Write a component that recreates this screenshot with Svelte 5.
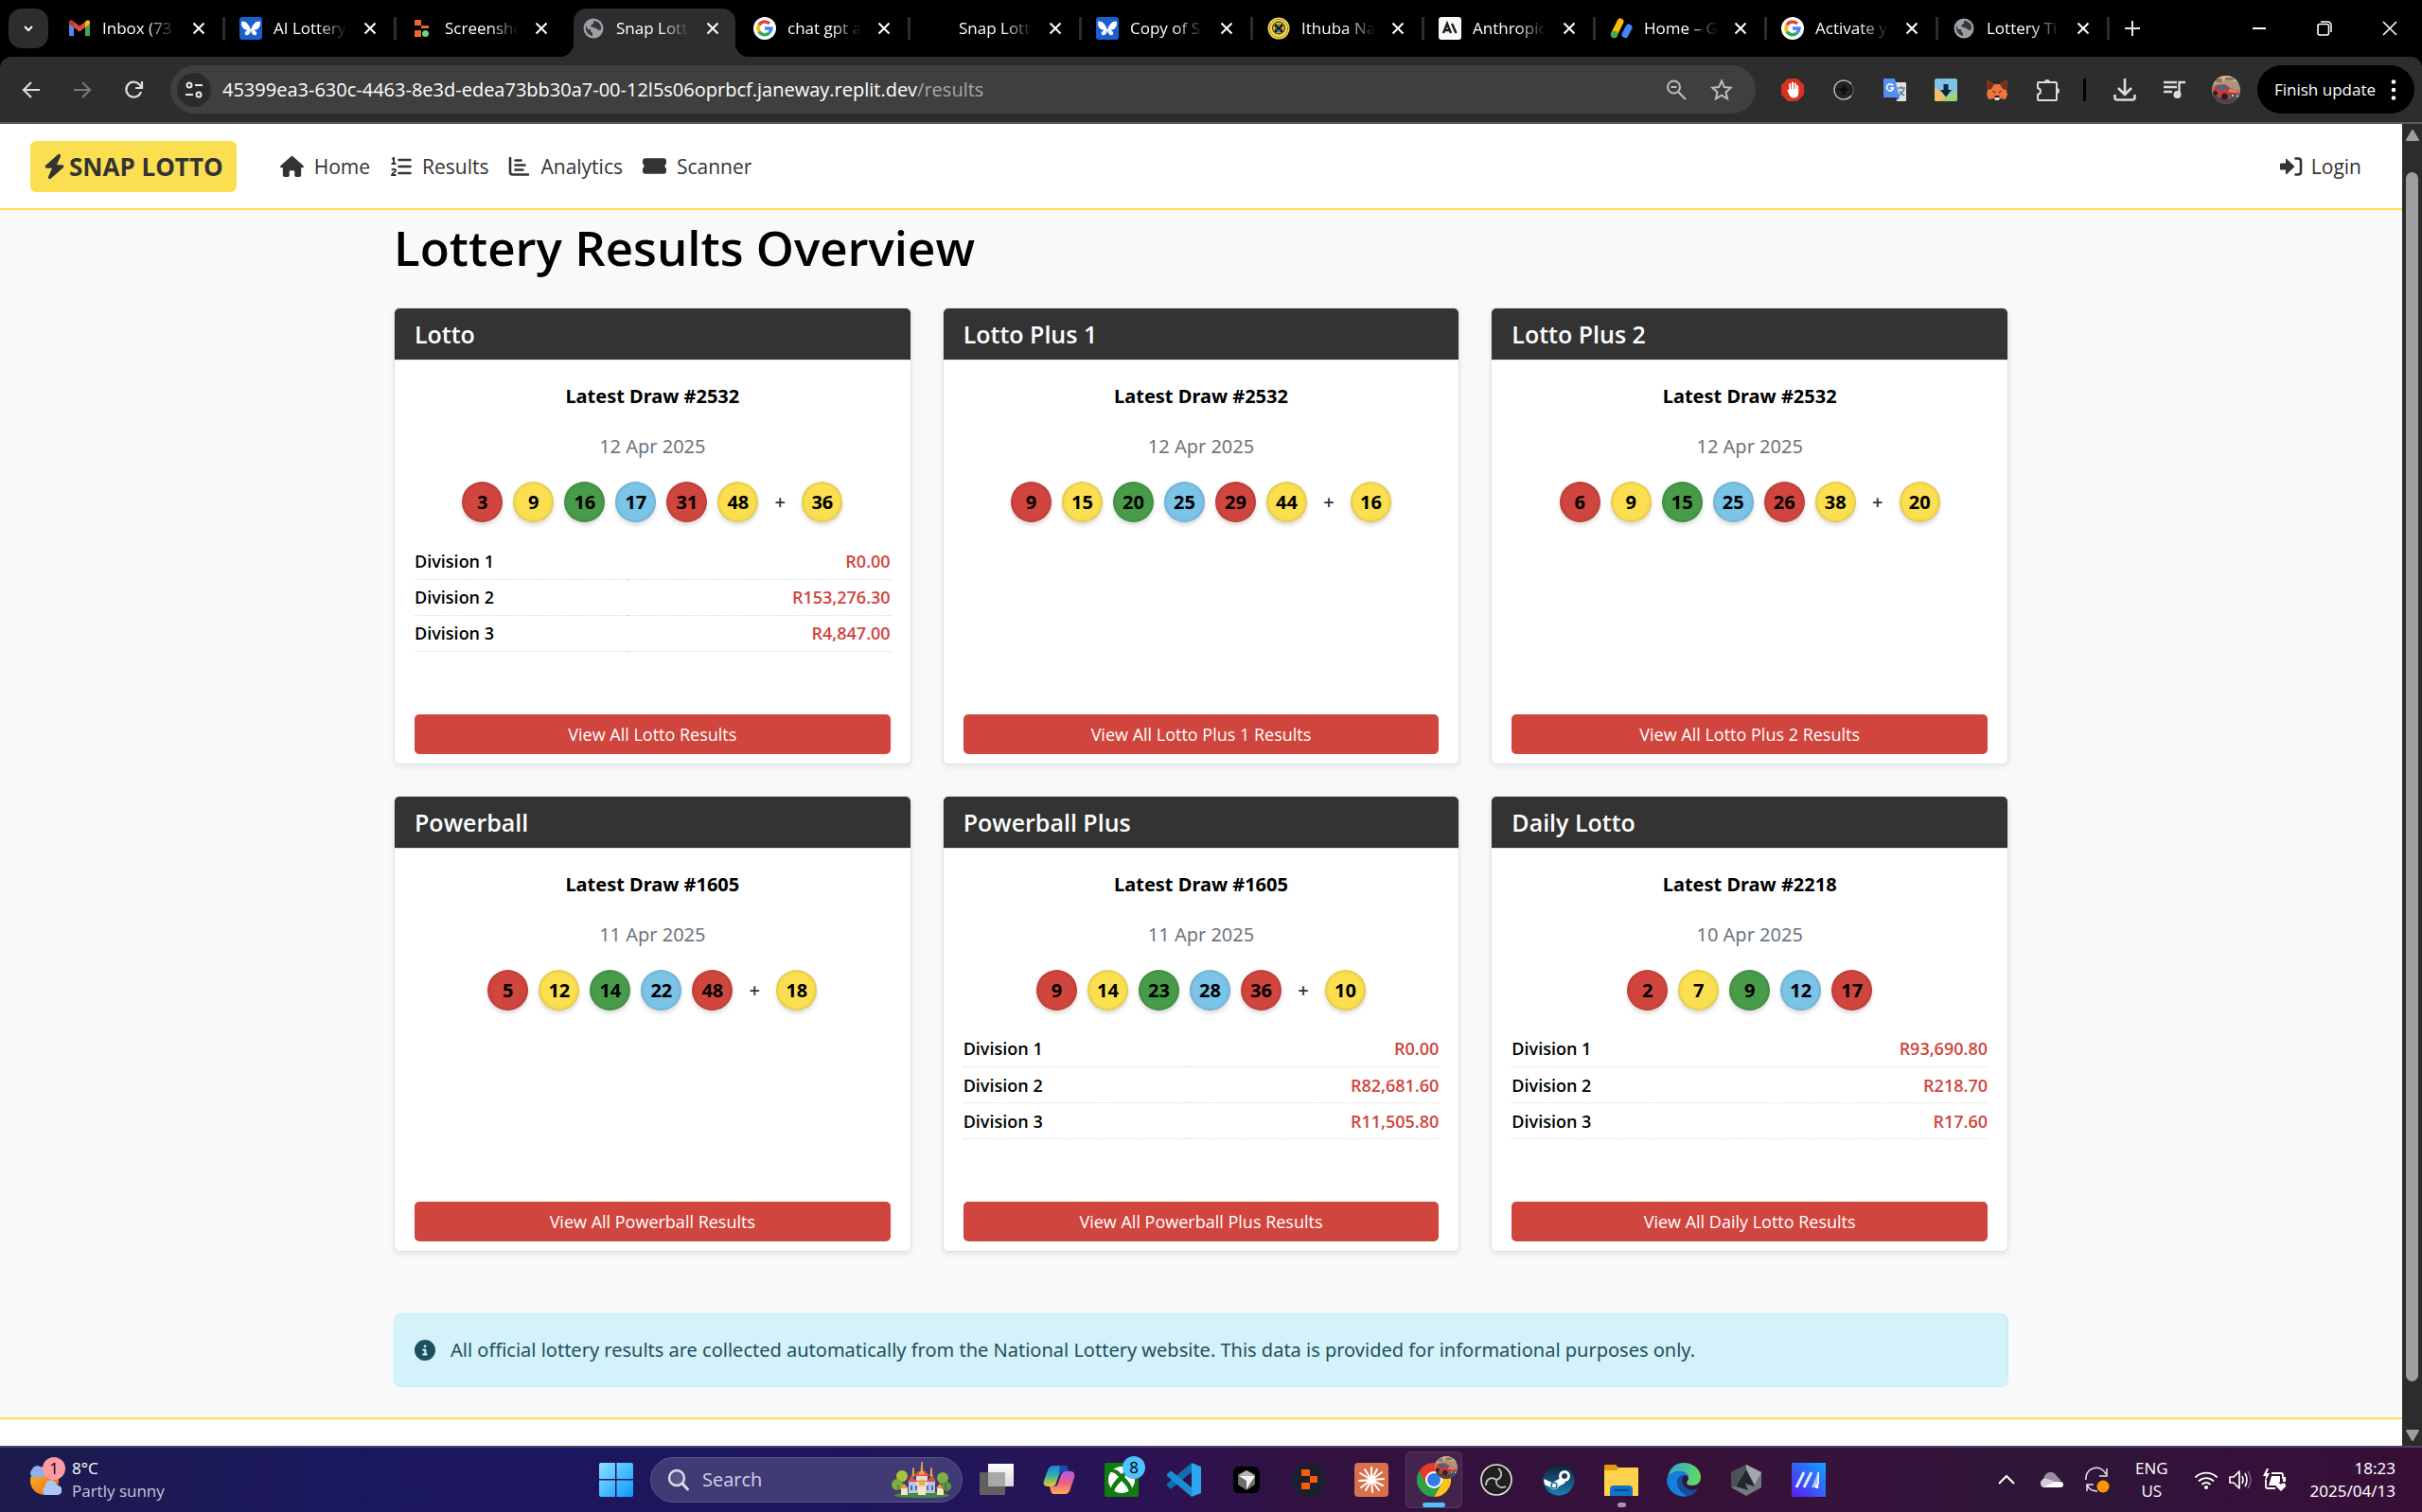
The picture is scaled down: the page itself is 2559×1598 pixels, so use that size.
<script>
  const tabs = [
    { title: 'Inbox (73', icon: 'gmail' },
    { title: 'AI Lottery', icon: 'butterfly' },
    { title: 'Screensho', icon: 'blocks' },
    { title: 'Snap Lott', icon: 'globe', active: true },
    { title: 'chat gpt a', icon: 'google' },
    { title: 'Snap Lott', icon: 'blank' },
    { title: 'Copy of S', icon: 'butterfly' },
    { title: 'Ithuba Na', icon: 'ithuba' },
    { title: 'Anthropic', icon: 'anthropic' },
    { title: 'Home – G', icon: 'adsense' },
    { title: 'Activate y', icon: 'google' },
    { title: 'Lottery Ti', icon: 'globe' }
  ];

  const extensions = ['adblock', 'dial', 'translate', 'save', 'fox', 'puzzle'];

  const links = [
    { label: 'Home', icon: 'home' },
    { label: 'Results', icon: 'list' },
    { label: 'Analytics', icon: 'chart' },
    { label: 'Scanner', icon: 'ticket' }
  ];

  const colours = ['red', 'yellow', 'green', 'blue', 'red', 'yellow'];

  const games = [
    { name: 'Lotto', draw: 2532, date: '12 Apr 2025', balls: [3, 9, 16, 17, 31, 48], bonus: 36, prizes: ['R0.00', 'R153,276.30', 'R4,847.00'] },
    { name: 'Lotto Plus 1', draw: 2532, date: '12 Apr 2025', balls: [9, 15, 20, 25, 29, 44], bonus: 16, prizes: [] },
    { name: 'Lotto Plus 2', draw: 2532, date: '12 Apr 2025', balls: [6, 9, 15, 25, 26, 38], bonus: 20, prizes: [] },
    { name: 'Powerball', draw: 1605, date: '11 Apr 2025', balls: [5, 12, 14, 22, 48], bonus: 18, prizes: [] },
    { name: 'Powerball Plus', draw: 1605, date: '11 Apr 2025', balls: [9, 14, 23, 28, 36], bonus: 10, prizes: ['R0.00', 'R82,681.60', 'R11,505.80'] },
    { name: 'Daily Lotto', draw: 2218, date: '10 Apr 2025', balls: [2, 7, 9, 12, 17], bonus: null, prizes: ['R93,690.80', 'R218.70', 'R17.60'] }
  ];

  const apps = [
    { name: 'Task view', icon: 'taskview' },
    { name: 'Copilot', icon: 'copilot' },
    { name: 'Xbox', icon: 'xbox', badge: '8' },
    { name: 'Visual Studio Code', icon: 'vscode' },
    { name: 'Cursor', icon: 'cursor' },
    { name: 'Replit', icon: 'replit' },
    { name: 'Claude', icon: 'claude' },
    { name: 'Chrome', icon: 'chrome', active: true },
    { name: 'OBS Studio', icon: 'obs' },
    { name: 'Steam', icon: 'steam' },
    { name: 'File Explorer', icon: 'folder', open: true },
    { name: 'Edge', icon: 'edge' },
    { name: 'Armoury Crate', icon: 'armoury' },
    { name: 'MyASUS', icon: 'myasus' }
  ];
</script>

{#snippet photo()}
  <svg class="photo" viewBox="0 0 30 30" aria-hidden="true">
    <defs><clipPath id="round"><circle cx="15" cy="15" r="15" /></clipPath></defs>
    <g clip-path="url(#round)">
      <rect width="30" height="30" fill="#a9967c" />
      <path d="M0 0h30v7L16 5 0 9z" fill="#cdb795" />
      <path d="M4 3h7v4H4zM14 2h9v3h-9z" fill="#8d7659" />
      <path d="M0 21h30v9H0z" fill="#4d4342" />
      <path d="M1 15l3-5 10-1 7 5 7 2 1 6-7 3-12-1-8-4z" fill="#cc3d31" />
      <path d="M5 11l8-1 5 4-11 1z" fill="#3b669c" />
      <path d="M18 14l9 2v2l-9-1z" fill="#e08d5e" />
      <circle cx="13.500" cy="22" r="3.500" fill="#20242e" />
      <circle cx="3.500" cy="18.500" r="2.500" fill="#20242e" />
      <path d="M19 19l9 1v4l-8 1z" fill="#41506c" />
      <path d="M21 20l2 .5v1.500l-2-.5zM26 20.500l2 .5v1.500l-2-.5z" fill="#e9edf2" />
    </g>
  </svg>
{/snippet}

{#snippet icon(name)}
  {#if name === 'gmail'}
    <svg class="i24" viewBox="0 0 24 24" aria-hidden="true"><path d="M1 6v13a1 1 0 0 0 1 1h4V9z" fill="#4c8bf5" /><path d="M23 6v13a1 1 0 0 1-1 1h-4V9z" fill="#45a654" /><path d="M18 5v6l5-4V5.500C23 3 20.500 2.500 19 4z" fill="#fbbc04" /><path d="M6 5l6 4.500L18 5v6l-6 4.500L6 11z" fill="#e5483a" /><path d="M6 5v6L1 7V5.500C1 3 3.500 2.500 5 4z" fill="#c5372c" /></svg>
  {:else if name === 'butterfly'}
    <svg class="i24" viewBox="0 0 24 24" aria-hidden="true"><rect width="24" height="24" rx="3" fill="#1a5fd0" /><path d="M12 14C11 9 7 4 3 4.500 1 5 2 11.500 5.500 13c2 .8 3.500.8 5 .3-3 .7-5.500 2.700-4.500 5 1.200 2 5 1.500 6-4.300zM12 14c1-5 5-10 9-9.500 2 .5 1 7-2.500 8.500-2 .8-3.500.8-5 .3 3 .7 5.500 2.700 4.500 5-1.200 2-5 1.500-6-4.300z" fill="#fff" /></svg>
  {:else if name === 'blocks'}
    <svg class="i24" viewBox="0 0 24 24" aria-hidden="true"><path d="M4 3h7v6H4zM11 9h8v3h-8zM4 14h7v7H4z" fill="#e8682c" /><circle cx="15.500" cy="17.500" r="3.500" fill="#74d183" /></svg>
  {:else if name === 'globe'}
    <svg class="i24" viewBox="0 0 24 24" aria-hidden="true"><circle cx="12" cy="12" r="10.500" fill="#9aa0a6" /><path d="M4 9c-1 5 2 10 7 11v-3l-2-2v-2H6zM12 4c5 0 9 4 8 9l-3 1-2-2-3-1-3-1 1-2 2-1z" fill="#35373a" /></svg>
  {:else if name === 'google'}
    <svg class="i24" viewBox="0 0 24 24" aria-hidden="true"><circle cx="12" cy="12" r="12" fill="#fff" /><g fill="none" stroke-width="3.500"><path d="M6 8.500a7 7 0 0 1 11-1.500" stroke="#ea4335" /><path d="M6 15.500a7 7 0 0 1 0-7" stroke="#fbbc05" /><path d="M16.500 17A7 7 0 0 1 6 15.500" stroke="#34a853" /><path d="M12 12h7a7 7 0 0 1-2.500 5" stroke="#4285f4" /></g></svg>
  {:else if name === 'ithuba'}
    <svg class="i24" viewBox="0 0 24 24" aria-hidden="true"><circle cx="12" cy="12" r="11.500" fill="#f0d648" /><circle cx="12" cy="12" r="9.500" fill="none" stroke="#7b6c20" stroke-dasharray="2 1" /><circle cx="12" cy="11.500" r="6.500" fill="#d8b92f" stroke="#222" /><path d="M8 8l8 8M16 8l-8 8" stroke="#111" stroke-width="2.600" /><path d="M12 7l2 2-2 2-2-2z" fill="#2f9e44" /><path d="M12 13l2 2-2 2-2-2z" fill="#3a8ee0" /><path d="M8 10l2 2-2 2zM16 10l-2 2 2 2z" fill="#d6402f" /></svg>
  {:else if name === 'anthropic'}
    <svg class="i24" viewBox="0 0 24 24" aria-hidden="true"><rect width="24" height="24" rx="3" fill="#faf9f5" /><path d="M5 17L9 7l4 10M6.500 14h5M14 7l4.500 10" fill="none" stroke="#191919" stroke-width="2.400" /></svg>
  {:else if name === 'adsense'}
    <svg class="i24" viewBox="0 0 24 24" aria-hidden="true"><path d="M4.500 18L11 5" stroke="#fbbc04" stroke-width="7" stroke-linecap="round" /><path d="M16 18.500l4-7.500" stroke="#4285f4" stroke-width="7" stroke-linecap="round" /><circle cx="4.500" cy="18.500" r="3.700" fill="#45a654" /></svg>
  {:else if name === 'blank'}
    <span class="i24"></span>
  {:else if name === 'adblock'}
    <svg class="i24" viewBox="0 0 24 24" aria-hidden="true"><path d="M7 0h10l7 7v10l-7 7H7l-7-7V7z" fill="#d9301f" /><path d="M9.200 6v6M12 4.500V13M14.800 5.500V13M17.200 8v6" stroke="#fff" stroke-width="2" stroke-linecap="round" /><path d="M8.200 11h10v4c0 4-2 5.500-5 5.500s-4-1.500-5-4l-2-4q1-1.500 2 0z" fill="#fff" /></svg>
  {:else if name === 'dial'}
    <svg class="i24" viewBox="0 0 24 24" aria-hidden="true"><circle cx="12" cy="12" r="9.500" fill="#242424" stroke="#111" stroke-width="2" /><path d="M20 6A10 10 0 1 0 20 18" fill="none" stroke="#c9c9c9" stroke-width="1.300" /><path d="M20 6a10 10 0 0 1 0 12" fill="none" stroke="#777" /><path d="M5 11l5-1 2-4 2 4 4 1-4 3-1 3h-3v-3z" fill="#0c0c0c" /></svg>
  {:else if name === 'translate'}
    <svg class="i24" viewBox="0 0 24 24" aria-hidden="true"><path d="M11 4h12a1 1 0 0 1 1 1v18a1 1 0 0 1-1 1h-9z" fill="#dfe2e4" /><path d="M15 10h8M19 8v2M22 10c-1 4-3 6-6 8M17 13c1 3 3 4 5 5" stroke="#607d9c" stroke-width="1.400" fill="none" /><path d="M13 20l4 0-4 4z" fill="#2b4fc0" /><path d="M1 0h11l5 20H1a1 1 0 0 1-1-1V1a1 1 0 0 1 1-1z" fill="#548ff0" /><path d="M10 7.500A3.500 3.500 0 1 0 10.500 10H7" fill="none" stroke="#fff" stroke-width="1.600" /></svg>
  {:else if name === 'save'}
    <svg class="i24" viewBox="0 0 24 24" aria-hidden="true"><rect width="24" height="24" rx="2" fill="#7fc4e8" /><path d="M0 9l12 10-5 5H2a2 2 0 0 1-2-2z" fill="#f5bd62" /><path d="M7 24l5-5 12-6v9a2 2 0 0 1-2 2z" fill="#a7cf7a" /><path d="M9.500 6h5v6h3.500L12 19.500 6 12h3.500z" fill="#0d2240" /></svg>
  {:else if name === 'fox'}
    <svg class="i24" viewBox="0 0 24 24" aria-hidden="true"><path d="M1 1l8 5h6l8-5-1 11 1 5-2 5-6-1-3 2-3-2-6 1-2-5 1-5z" fill="#f0733a" /><path d="M1 1l8 5-3 5-4 1zM23 1l-8 5 3 5 4 1z" fill="#763017" /><path d="M6 12l4 2v2zM18 12l-4 2v2z" fill="#263442" /><path d="M9 20h6l-1 3h-4z" fill="#e8ded5" /><path d="M10 18h4l1 2H9z" fill="#222" /></svg>
  {:else if name === 'puzzle'}
    <svg class="i24" viewBox="0 0 24 24" aria-hidden="true"><path d="M2 4h18q1 0 1 1v17q0 1-1 1H2q-1 0-1-1v-5c4-1 4-6 0-7V5q0-1 1-1z" fill="none" stroke="#dcdcdc" stroke-width="2" stroke-linejoin="round" /><path d="M8 4a3 3 0 0 1 6 0zM21 10a3 3 0 0 1 0 6z" fill="#dcdcdc" /></svg>
  {:else if name === 'home'}
    <svg class="fa" viewBox="0 0 576 512" aria-hidden="true"><path d="M575.8 255.500c0 18-15 32.100-32 32.100h-32l.7 160.200c0 2.700-.2 5.400-.5 8.100V472c0 22.100-17.900 40-40 40h-80c-22.100 0-40-17.900-40-40v-88c0-17.700-14.300-32-32-32h-64c-17.700 0-32 14.300-32 32v88c0 22.100-17.900 40-40 40h-80c-22.100 0-40-17.900-40-40V287.600H32c-18 0-32-14-32-32.100 0-9 3-17 10-24L266.400 8c7-7 15-8 22-8s15 2 21 7l255.400 224.500c8 7 12 15 11 24z" /></svg>
  {:else if name === 'list'}
    <svg class="fa narrow" viewBox="0 0 22 22" aria-hidden="true"><path d="M9 4h12M9 11h12M9 18h12" stroke="currentColor" stroke-width="2.600" stroke-linecap="round" /><path d="M1.500 3l2-1v6M1 8h5M1.500 15c1-2 4-1.500 4 .5 0 1-4 3-4 4.500H6" fill="none" stroke="currentColor" stroke-width="1.900" /></svg>
  {:else if name === 'chart'}
    <svg class="fa narrow" viewBox="0 0 22 22" aria-hidden="true"><path d="M1.500 2v15q0 2.500 2.500 2.500h16.500M7 4.500h6M7 9.500h10M7 14.500h8" fill="none" stroke="currentColor" stroke-width="2.600" stroke-linecap="round" /></svg>
  {:else if name === 'ticket'}
    <svg class="fa" viewBox="0 0 26 22" aria-hidden="true"><path d="M3 2h20q3 0 3 3v3c-2 .5-2 4.500 0 5v3q0 3-3 3H3q-3 0-3-3v-3c2-.5 2-4.500 0-5V5q0-3 3-3z" /></svg>
  {:else if name === 'taskview'}
    <svg class="i36" viewBox="0 0 36 36" aria-hidden="true"><defs><linearGradient id="tv" x1="0" y1="0" x2="0" y2="1"><stop offset="0" stop-color="#fff" /><stop offset="1" stop-color="#d8d8d8" /></linearGradient></defs><rect x="0" y="10" width="27" height="24" rx="1" fill="#606060" /><rect x="9" y="1" width="27" height="24" rx="1" fill="url(#tv)" /><path d="M9 10h18v15H9z" fill="#a8a8a8" /></svg>
  {:else if name === 'copilot'}
    <svg class="i36" viewBox="0 0 36 36" aria-hidden="true"><defs><linearGradient id="cpa" x1="0" y1="0" x2="0" y2="1"><stop offset="0" stop-color="#1683e0" /><stop offset=".5" stop-color="#35b5a0" /><stop offset="1" stop-color="#f2c81c" /></linearGradient><linearGradient id="cpb" x1="0" y1="0" x2="0" y2="1"><stop offset="0" stop-color="#a95ee8" /><stop offset=".5" stop-color="#ef5c87" /><stop offset="1" stop-color="#ffb054" /></linearGradient></defs><path d="M12 3h12c2 0 3 2 4 6h-5c-2 0-4 1-5 4l-3 8c-1 3-2 4-5 4H6c-4 0-5-3-4-6l4-11c1-3 3-5 6-5z" fill="url(#cpa)" /><path d="M19 3h5c2 0 3 2 4 6h-5c-2 0-4 1-5 2z" fill="#1749b4" /><path d="M24 33H12c-2 0-3-3-4-8h4c3 0 4-1 5-4l3-8c1-3 3-4 5-4h5c4 0 5 3 4 7l-4 11c-1 4-3 6-6 6z" fill="url(#cpb)" /></svg>
  {:else if name === 'xbox'}
    <svg class="i36" viewBox="0 0 36 36" aria-hidden="true"><rect width="36" height="36" rx="2" fill="#107c10" /><circle cx="18" cy="18" r="14" fill="#fff" /><path d="M8 7c4-1 7 2 10 5 3-3 6-6 10-5l3 3c-4-1-7 2-10 5 5 5 9 10 8 14l-3 2c-1-5-5-9-8-12-3 3-7 7-8 12l-3-2c-1-4 3-9 8-14-3-3-6-6-10-5z" fill="#107c10" /></svg>
  {:else if name === 'vscode'}
    <svg class="i36" viewBox="0 0 36 36" aria-hidden="true"><path d="M26 0l10 4v28l-10 4z" fill="#2aa7f0" /><path d="M26 0v10L5 27q-1 1-2 0l-3-3q-1-1 0-2z" fill="#0f6fae" /><path d="M26 36V26L5 9Q4 8 3 9l-3 3q-1 1 0 2z" fill="#1b8bd2" /></svg>
  {:else if name === 'cursor'}
    <svg class="i36" viewBox="0 0 36 36" aria-hidden="true"><rect x="4" y="4" width="28" height="28" rx="6" fill="#000" /><path d="M18 8l9 5v10l-9 6-9-6V13z" fill="#6d6d6d" /><path d="M9 13l9-5 9 5-9 2z" fill="#b5b5b5" /><path d="M10 14h17l-9 14v-9z" fill="#f1f1f1" /></svg>
  {:else if name === 'replit'}
    <svg class="i36" viewBox="0 0 36 36" aria-hidden="true"><circle cx="18" cy="18" r="18" fill="#1a202d" /><path d="M11 7h7q1 0 1 1v6h-8q-1 0-1-1V8q0-1 1-1zM19 14h7q1 0 1 1v5q0 1-1 1h-7zM11 21h8v6q0 1-1 1h-7q-1 0-1-1v-5q0-1 1-1z" fill="#ff5a0c" /></svg>
  {:else if name === 'claude'}
    <svg class="i36" viewBox="0 0 36 36" aria-hidden="true"><rect width="36" height="36" rx="4" fill="#d9704c" /><path d="M18 18L18 5M18 18l6-11M18 18l11-8M18 18l13-1M18 18l12 6M18 18l8 11M18 18l1 13M18 18l-6 11M18 18L7 26M18 18L5 19M18 18L6 11M18 18L11 7" stroke="#fff" stroke-width="2" stroke-linecap="round" /></svg>
  {:else if name === 'chrome'}
    <svg class="i36" viewBox="0 0 36 36" aria-hidden="true"><path d="M2.400 9A18 18 0 0 1 33.600 9L18 18z" fill="#e8392c" /><path d="M33.600 9A18 18 0 0 1 18 36L26 22V9z" fill="#fcc31e" /><path d="M2.400 9A18 18 0 0 0 18 36l8-13.500-8-4.500z" fill="#2da04a" /><path d="M2.400 9L10 22l8-4 0-9h15.600z" fill="#e8392c" /><path d="M18 9h15.600L26 22.500z" fill="#fcc31e" /><circle cx="18" cy="18" r="9" fill="#fff" /><circle cx="18" cy="18" r="7" fill="#2f7de9" /></svg>
  {:else if name === 'obs'}
    <svg class="i36" viewBox="0 0 36 36" aria-hidden="true"><circle cx="18" cy="18" r="16" fill="#211f20" stroke="#e8e8e8" stroke-width="1.600" /><g fill="none" stroke="#c6c6c6" stroke-width="1.800"><path d="M18 18c6-2 7-8 2-12" /><path d="M18 18c-5-4-11-1-11 6" /><path d="M18 18c-1 6 4 10 10 7" /></g></svg>
  {:else if name === 'steam'}
    <svg class="i36" viewBox="0 0 36 36" aria-hidden="true"><defs><linearGradient id="st" x1="0" y1="0" x2="0" y2="1"><stop offset="0" stop-color="#111d33" /><stop offset="1" stop-color="#1583b8" /></linearGradient></defs><circle cx="18" cy="18" r="16.500" fill="url(#st)" /><path d="M2 17l9 4 9-5 5 5-7 4a5 5 0 0 1-9 1l-6-3z" fill="#fff" /><circle cx="24" cy="14" r="6" fill="#fff" /><circle cx="24" cy="14" r="3.500" fill="#1b3350" stroke="#fff" /><circle cx="13" cy="24" r="3" fill="none" stroke="#1a6796" stroke-width="1.500" /></svg>
  {:else if name === 'folder'}
    <svg class="i36" viewBox="0 0 36 36" aria-hidden="true"><path d="M0 3q0-1 1-1h11l4 4v8H0z" fill="#e09c0d" /><path d="M0 8h13l3-3h19q1 0 1 1v28q0 1-1 1H1q-1 0-1-1z" fill="#ffd24a" /><path d="M6 35V28q0-4 4-4h16q4 0 4 4v7z" fill="#1173c7" /><path d="M11 29h14" stroke="#0a4a8b" stroke-width="2" stroke-linecap="round" /></svg>
  {:else if name === 'edge'}
    <svg class="i36" viewBox="0 0 36 36" aria-hidden="true"><defs><linearGradient id="eg" x1="0" y1="0" x2="1" y2=".3"><stop offset="0" stop-color="#2da6dd" /><stop offset="1" stop-color="#5fd866" /></linearGradient></defs><path d="M1 15C3 5 10 0 18 0c10 0 18 7 18 15 0 6-4 9-9 9-4 0-6-1-6-3 0-1 2-2 2-5 0-4-4-7-9-7C8 9 3 12 1 15z" fill="url(#eg)" /><path d="M0 18C1 12 8 9 14 9c5 0 9 3 9 7 0-2-2-3-4-3-6 0-10 6-7 12 2 5 7 9 11 10C12 38 0 30 0 18z" fill="#1580dc" /><path d="M12 25c-3-6 1-12 7-12-3 3-4 7-1 11 3 5 10 6 15 3-3 5-7 8-11 8-4-1-8-5-10-10z" fill="#124f9e" /></svg>
  {:else if name === 'armoury'}
    <svg class="i36" viewBox="0 0 36 36" aria-hidden="true"><path d="M18 2l16 8v16l-16 9-16-9V10z" fill="#707880" /><path d="M18 2l16 8-7 13-9-16z" fill="#a2a8ad" /><path d="M18 7l9 18-10-3 3 7-13-4z" fill="#23272b" /><path d="M2 10l16-8v5L7 25l-5 1z" fill="#4b5258" /></svg>
  {:else if name === 'myasus'}
    <svg class="i36" viewBox="0 0 36 36" aria-hidden="true"><defs><linearGradient id="ma" x1="0" y1="1" x2="1" y2="0"><stop offset="0" stop-color="#5a1cf0" /><stop offset="1" stop-color="#10a4ff" /></linearGradient></defs><path d="M0 0h36v36H0z" fill="url(#ma)" /><path d="M5 26L13 10M13 26l8-16" fill="none" stroke="#e6ecff" stroke-width="2.800" /><path d="M21 26l7-16v16" fill="#a9c4ff" /><path d="M28 10v13" stroke="#e6ecff" stroke-width="2" /><circle cx="26.500" cy="25" r="2" fill="#fff" /></svg>
  {/if}
{/snippet}

<div class="screen">
  <header class="tabstrip">
    <button class="tabsearch" aria-label="Search tabs"><svg class="i16" viewBox="0 0 16 16"><path d="M4 6l4 4 4-4" fill="none" stroke="#fff" stroke-width="2" /></svg></button>
    <div class="tabs">
      {#each tabs as tab}
        <div class="tab" class:active={tab.active}>
          <div class="tabface">
            {@render icon(tab.icon)}
            <span class="tabtitle">{tab.title}</span>
            <button class="close" aria-label="Close tab"><svg class="i16" viewBox="0 0 16 16"><path d="M2.500 2.500l11 11M13.500 2.500l-11 11" stroke="#fff" stroke-width="2" /></svg></button>
          </div>
        </div>
      {/each}
    </div>
    <button class="newtab" aria-label="New tab"><svg class="i16" viewBox="0 0 16 16"><path d="M8 0v16M0 8h16" stroke="#e8e8e8" stroke-width="2" /></svg></button>
    <div class="winbuttons">
      <button aria-label="Minimise"><svg class="i16" viewBox="0 0 16 16"><path d="M1 8h14" stroke="#fff" stroke-width="2" /></svg></button>
      <button aria-label="Restore"><svg class="i16" viewBox="0 0 16 16"><path d="M4 1h7q4 0 4 4v7" fill="none" stroke="#fff" stroke-width="1.500" /><rect x="1" y="3.500" width="11.500" height="11.500" rx="2" fill="none" stroke="#fff" stroke-width="1.600" /></svg></button>
      <button aria-label="Close"><svg class="i16" viewBox="0 0 16 16"><path d="M1 1l14 14M15 1L1 15" stroke="#fff" stroke-width="1.600" /></svg></button>
    </div>
  </header>

  <div class="toolbar">
    <div class="navbuttons">
      <button aria-label="Back"><svg class="i24" viewBox="0 0 24 24"><path d="M21 12H4M12 4l-8 8 8 8" fill="none" stroke="#dcdcdc" stroke-width="2.200" /></svg></button>
      <button aria-label="Forward"><svg class="i24" viewBox="0 0 24 24"><path d="M3 12h17M12 4l8 8-8 8" fill="none" stroke="#777" stroke-width="2.200" /></svg></button>
      <button aria-label="Reload"><svg class="i24" viewBox="0 0 24 24"><path d="M20 14a8 8 0 1 1-2-8l2 2.500M21 3v7h-7" fill="none" stroke="#dcdcdc" stroke-width="2.200" /></svg></button>
    </div>
    <div class="omnibox">
      <button class="siteinfo" aria-label="Site information"><svg class="i24" viewBox="0 0 24 24"><g fill="none" stroke="#e8e8e8" stroke-width="2"><circle cx="7" cy="7" r="2.500" /><path d="M13 7h8M3 17h8" /><circle cx="17" cy="17" r="2.500" /></g></svg></button>
      <span class="url">45399ea3-630c-4463-8e3d-edea73bb30a7-00-12l5s06oprbcf.janeway.replit.dev<span class="path">/results</span></span>
      <button aria-label="Zoom"><svg class="i24" viewBox="0 0 24 24"><circle cx="9.500" cy="9" r="6.500" fill="none" stroke="#bdbdbd" stroke-width="2" /><path d="M14 14l8 8M6.500 9h6" stroke="#bdbdbd" stroke-width="2" /></svg></button>
      <button aria-label="Bookmark"><svg class="i24" viewBox="0 0 24 24"><path d="M12 2.500l2.800 6.600 7 .6-5.300 4.700 1.600 7L12 17.600l-6.100 3.800 1.600-7L2.200 9.700l7-.6z" fill="none" stroke="#bdbdbd" stroke-width="2" /></svg></button>
    </div>
    <div class="extensions">
      {#each extensions as name}
        <button aria-label={name}>{@render icon(name)}</button>
      {/each}
    </div>
    <span class="divider"></span>
    <div class="tools">
      <button aria-label="Downloads"><svg class="i24" viewBox="0 0 24 24"><path d="M12 0v16M5 10l7 7 7-7M1.500 17v3q0 2.500 2.500 2.500h16q2.500 0 2.500-2.500v-3" fill="none" stroke="#dcdcdc" stroke-width="2.600" /></svg></button>
      <button aria-label="Media"><svg class="i24" viewBox="0 0 24 24"><path d="M1 4h14M1 9h14M1 14h9M17.500 18V4H24" fill="none" stroke="#dcdcdc" stroke-width="2.400" /><circle cx="15.500" cy="17" r="4" fill="#dcdcdc" /></svg></button>
      <button aria-label="Profile">{@render photo()}</button>
    </div>
    <button class="update">Finish update<svg class="dots" viewBox="0 0 6 24" aria-hidden="true"><circle cx="3" cy="3.500" r="2.300" /><circle cx="3" cy="12" r="2.300" /><circle cx="3" cy="20.500" r="2.300" /></svg></button>
  </div>

  <div class="viewport">
    <div class="page">
      <nav class="navbar">
        <a class="brand" href="#home"><svg class="bolt" viewBox="0 0 448 512" aria-hidden="true"><path d="M349.400 44.600c5.900-13.700 1.500-29.700-10.600-38.500s-28.600-8-39.900 1.800l-256 224c-10 8.800-13.600 22.900-8.900 35.300S50.700 288 64 288h111.500L98.600 467.400c-5.900 13.700-1.500 29.700 10.600 38.500s28.600 8 39.900-1.800l256-224c10-8.800 13.600-22.900 8.900-35.300s-16.600-20.700-30-20.700H272.500z" /></svg>SNAP LOTTO</a>
        <div class="links">
          {#each links as link}
            <a href="#{link.label}">{@render icon(link.icon)}{link.label}</a>
          {/each}
        </div>
        <a class="login" href="#login"><svg class="fa" viewBox="0 0 24 22" aria-hidden="true"><path d="M1 8h6V3l8.500 8L7 19v-5H1z" stroke="currentColor" stroke-linejoin="round" /><path d="M17 2.500h2.500q3 0 3 3v11q0 3-3 3H17" fill="none" stroke="currentColor" stroke-width="2.600" stroke-linecap="round" /></svg>Login</a>
      </nav>

      <main>
        <h1>Lottery Results Overview</h1>
        <div class="grid">
          {#each games as game}
            <section class="card">
              <h2>{game.name}</h2>
              <div class="body">
                <p class="draw">Latest Draw #{game.draw}</p>
                <p class="date">{game.date}</p>
                <div class="balls">
                  {#each game.balls as n, i}
                    <span class="ball {colours[i]}">{n}</span>
                  {/each}
                  {#if game.bonus !== null}
                    <span class="plus">+</span>
                    <span class="ball yellow">{game.bonus}</span>
                  {/if}
                </div>
                {#if game.prizes.length}
                  <table>
                    <tbody>
                      {#each game.prizes as prize, i}
                        <tr><th scope="row">Division {i + 1}</th><td>{prize}</td></tr>
                      {/each}
                    </tbody>
                  </table>
                {/if}
                <a class="viewall" href="#results-{game.name}">View All {game.name} Results</a>
              </div>
            </section>
          {/each}
        </div>
        <div class="alert" role="note">
          <svg class="info" viewBox="0 0 512 512" aria-hidden="true"><path d="M256 512A256 256 0 1 0 256 0a256 256 0 1 0 0 512zM216 336h24v-64h-24c-13.300 0-24-10.700-24-24s10.700-24 24-24h48c13.300 0 24 10.700 24 24v88h8c13.300 0 24 10.700 24 24s-10.700 24-24 24h-80c-13.300 0-24-10.700-24-24s10.700-24 24-24zm40-208a32 32 0 1 1 0 64 32 32 0 1 1 0-64z" /></svg>
          All official lottery results are collected automatically from the National Lottery website. This data is provided for informational purposes only.
        </div>
      </main>
      <footer></footer>
    </div>
    <div class="scrollbar">
      <svg class="arrow" viewBox="0 0 16 14" aria-hidden="true"><path d="M8 2l6 10H2z" fill="#9e9e9e" stroke="#9e9e9e" stroke-width="2" stroke-linejoin="round" /></svg>
      <div class="track"><span class="thumb"></span></div>
      <svg class="arrow" viewBox="0 0 16 14" aria-hidden="true"><path d="M8 12L2 2h12z" fill="#9e9e9e" stroke="#9e9e9e" stroke-width="2" stroke-linejoin="round" /></svg>
    </div>
  </div>

  <div class="taskbar">
    <button class="weather">
      <span class="weathericon">
        <svg class="i36" viewBox="0 0 36 36" aria-hidden="true"><defs><linearGradient id="sun" x1="0" y1="0" x2="1" y2="1"><stop offset="0" stop-color="#f9b62c" /><stop offset="1" stop-color="#ec6a12" /></linearGradient></defs><circle cx="18" cy="19" r="15" fill="url(#sun)" /><path d="M5 15a5 5 0 0 1 0-8 6 6 0 0 1 10-2l4 10z" fill="#8fb0ee" /><path d="M19 34a5 5 0 0 1 0-9 6 6 0 0 1 12-1 5 5 0 0 1 1 10z" fill="#a9c8f7" /></svg>
        <span class="badge pink">1</span>
      </span>
      <span class="weathertext"><span>8°C</span><span class="dim">Partly sunny</span></span>
    </button>

    <div class="apps">
      <button class="app" aria-label="Start"><svg class="i36" viewBox="0 0 36 36"><defs><linearGradient id="win" gradientUnits="userSpaceOnUse" x1="0" y1="0" x2="36" y2="36"><stop offset="0" stop-color="#8be2ff" /><stop offset="1" stop-color="#0b98ff" /></linearGradient></defs><path d="M2 0h15v17H0V2q0-2 2-2zM18.500 0H34q2 0 2 2v15H18.500zM0 18.500h17V36H2q-2 0-2-2zM18.500 18.500H36V34q0 2-2 2H18.500z" fill="url(#win)" /></svg></button>
      <label class="search">
        <svg class="i24" viewBox="0 0 24 24" aria-hidden="true"><circle cx="11" cy="10" r="8" fill="#ffffff22" stroke="#dcdcea" stroke-width="2.400" /><path d="M17 16l5.500 6" stroke="#dcdcea" stroke-width="3" stroke-linecap="round" /></svg>
        <input type="text" placeholder="Search" aria-label="Search" />
        <svg class="castle" viewBox="0 0 64 38" aria-hidden="true">
          <path d="M2 36c8-6 50-7 60 0-10 3-50 3-60 0z" fill="#3f8a45" />
          <path d="M18 20h28v13H18z" fill="#b9c4ea" />
          <path d="M26 13h12v18H26z" fill="#e6d9d6" />
          <path d="M17 21l4-7 5 6h12l5-6 4 7zM24 15l4-5h8l4 5z" fill="#dd5439" />
          <path d="M31 10l1-10 1 10 2 3h-6zM22 15l1-9 1 9zM41 15l1-9 1 9z" fill="#e9a93d" stroke="#e9a93d" />
          <path d="M20 25h2v5h-2zM25 25h2v5h-2zM37 25h2v5h-2zM42 25h2v5h-2z" fill="#5667b5" />
          <path d="M29 19h6v6h-6z" fill="#e5b039" />
          <path d="M28 27h8v8h-8zM10 27h7v8h-7zM48 27h7v8h-7z" fill="#f6e6bf" />
          <path d="M9 28l4-5 5 5zM47 28l4-5 5 5z" fill="#eb9b48" />
          <circle cx="11" cy="15" r="6" fill="#a9c43f" /><circle cx="6" cy="24" r="6" fill="#7fae3c" /><circle cx="54" cy="17" r="6" fill="#7fb03e" /><circle cx="58" cy="26" r="5" fill="#5c9b3d" />
          <path d="M7 24v10M57 22v12" stroke="#5b4a2c" />
        </svg>
      </label>
      {#each apps as app}
        <button class="app" class:active={app.active} aria-label={app.name}>
          {@render icon(app.icon)}
          {#if app.badge}<span class="badge blue">{app.badge}</span>{/if}
          {#if app.active}<span class="face">{@render photo()}</span><span class="bar"></span>{/if}
          {#if app.open}<span class="dot"></span>{/if}
        </button>
      {/each}
    </div>

    <div class="tray">
      <button aria-label="Show hidden icons"><svg class="i24" viewBox="0 0 24 24"><path d="M4 16l8-8 8 8" fill="none" stroke="#fff" stroke-width="2" /></svg></button>
      <button class="cloud" aria-label="OneDrive"><svg class="i24" viewBox="0 0 24 24"><path d="M4 14A7 7 0 0 1 17 8l5 5z" fill="#9a8da4" /><path d="M0 16a5 5 0 0 1 7-5l9 3-8 6H5a4 4 0 0 1-5-4z" fill="#d5ccd9" /><path d="M3 20l12-6q3-1 6 0a3 3 0 0 1 0 6z" fill="#fff" /></svg></button>
      <button class="sync" aria-label="Updates"><svg class="i28" viewBox="0 0 28 28"><path d="M2 14A11 11 0 0 1 23 8M24 2v8h-8M3 26v-7h7M3 19c2 5 6 7 11 7" fill="none" stroke="#e8e8e8" stroke-width="1.500" /><circle cx="20" cy="21" r="6.500" fill="#ff9500" /></svg></button>
      <button class="lang"><span>ENG</span><span>US</span></button>
      <button class="status" aria-label="Network, volume and battery">
        <svg class="i24" viewBox="0 0 24 24"><g fill="none" stroke="#fff" stroke-width="1.800" stroke-linecap="round"><path d="M1 9a16 16 0 0 1 22 0M4.500 13a11 11 0 0 1 15 0M8 16.500a6 6 0 0 1 8 0" /></g><circle cx="12" cy="20" r="2" fill="#fff" /></svg>
        <svg class="i24" viewBox="0 0 24 24"><path d="M1 9h4l6-6v18l-6-6H1z" fill="none" stroke="#fff" stroke-width="1.700" stroke-linejoin="round" /><path d="M14 8q2 4 0 8M17 5q4 7 0 14" fill="none" stroke="#fff" stroke-width="1.600" /><path d="M20 3q6 9 0 18" fill="none" stroke="#7a5e78" stroke-width="1.600" /></svg>
        <svg class="i24" viewBox="0 0 24 24"><path d="M9 5h10q2 0 2 2v4M3 12v7q0 2 2 2h8" fill="none" stroke="#fff" stroke-width="1.800" /><path d="M9 8h9v6l-4 4H6zM21 9h3v5h-3z" fill="#fff" /><path d="M4 0L0 8h3l-1 6 5-9H4l2-5z" fill="#fff" /><path d="M19 24l-5-5c-1-3 3-5 5-2 2-3 6-1 5 2z" fill="#fff" /></svg>
      </button>
      <button class="clock"><span>18:23</span><span>2025/04/13</span></button>
    </div>
  </div>
</div>

<style>
  :global(body) { margin: 0; }
  .screen, .screen * { box-sizing: border-box; }
  .screen {
    display: flex;
    flex-direction: column;
    min-height: 100vh;
    font-family: "Open Sans", "Noto Sans", sans-serif;
    font-size: 20px;
    color: #000;
    background: #000;
  }
  button {
    display: flex;
    align-items: center;
    justify-content: center;
    padding: 0;
    border: 0;
    background: none;
    color: inherit;
    font: inherit;
    flex: none;
  }
  a { color: inherit; text-decoration: none; }
  svg { display: block; flex: none; }
  .i16 { width: 16px; height: 16px; }
  .i24 { width: 24px; height: 24px; flex: none; }
  .i28 { width: 28px; height: 28px; }
  .i36 { width: 36px; height: 36px; }

  .tabstrip { display: flex; height: 60px; color: #fff; background: #000; }
  .tabsearch { width: 42px; height: 42px; margin: 9px 6px 0 9px; border-radius: 14px; background: #2d2d2d; }
  .tabs { display: flex; flex: 0 1 2172px; min-width: 0; }
  .tab { position: relative; flex: 1 1 0; min-width: 0; padding: 9px 4px 0 6px; }
  .tab::after { content: ""; position: absolute; right: 0; top: 18px; width: 3px; height: 24px; background: #2d2d2d; }
  .tab.active::after, .tab:has(+ .active)::after { display: none; }
  .tabface { position: relative; display: flex; align-items: center; height: 42px; padding-left: 9px; }
  .active .tabface { height: 51px; padding-bottom: 9px; border-radius: 14px 14px 0 0; background: #2d2d2d; }
  .active .tabface::before, .active .tabface::after {
    content: "";
    position: absolute;
    bottom: 0;
    left: -14px;
    width: 14px;
    height: 14px;
    background: radial-gradient(circle at 0 0, transparent 14px, #2d2d2d 14px);
  }
  .active .tabface::after { left: auto; right: -14px; background: radial-gradient(circle at 100% 0, transparent 14px, #2d2d2d 14px); }
  .tabtitle {
    flex: 1;
    min-width: 0;
    margin: 0 12px;
    white-space: nowrap;
    font-size: 17px;
    line-height: 26px;
    mask-image: linear-gradient(90deg, #000 60%, transparent);
  }
  .close { width: 24px; height: 24px; margin-right: 12px; }
  .newtab { width: 44px; height: 60px; padding-left: 3px; }
  .winbuttons { display: flex; margin-left: auto; }
  .winbuttons button { width: 69px; height: 60px; }

  .toolbar { display: flex; align-items: center; height: 71px; padding: 0 8px 0 12px; border-bottom: 2px solid #5a5a5a; border-radius: 12px 12px 0 0; background: #2d2d2d; color: #fff; }
  .navbuttons { display: flex; gap: 12px; margin-right: 18px; }
  .navbuttons button { width: 42px; height: 42px; }
  .omnibox { display: flex; flex: 1; align-items: center; gap: 24px; height: 51px; padding: 0 24px 0 7px; border-radius: 26px; background: #3f3f3f; }
  .siteinfo { width: 36px; height: 36px; border-radius: 18px; background: #2a2a2a; }
  .url { flex: 1; margin-left: -12px; overflow: hidden; white-space: nowrap; font-size: 20px; line-height: 30px; }
  .path { color: #a8a8a8; }
  .extensions { display: flex; gap: 30px; margin-left: 27px; }
  .divider { width: 3px; height: 24px; margin: 0 29px 0 25px; background: #000; }
  .tools { display: flex; align-items: center; gap: 28px; margin-right: 18px; }
  .photo { width: 30px; height: 30px; }
  .update { gap: 16px; height: 51px; padding: 0 19px 0 18px; border-radius: 26px; background: #000; font-size: 17px; }
  .dots { width: 6px; height: 24px; fill: #fff; }

  .viewport { display: flex; flex: 1; }
  .page { display: flex; flex: 1; flex-direction: column; min-width: 0; background: #f8f9fb; }
  .navbar { display: flex; align-items: center; padding: 18px 43px 17px 32px; border-bottom: 2px solid #fbdf50; background: #fff; color: #333; }
  .brand { display: flex; align-items: center; gap: 4px; height: 54px; padding: 0 14px; margin-right: 46px; border-radius: 6px; background: #fbdf50; font-size: 26px; font-weight: 700; }
  .bolt { width: 23px; height: 28px; fill: currentColor; }
  .links { display: flex; gap: 21px; }
  .links a, .login { display: flex; align-items: center; gap: 11px; font-size: 21px; font-weight: 500; line-height: 32px; }
  .login { margin-left: auto; gap: 9px; }
  .fa { width: 25px; height: 22px; fill: currentColor; }
  .fa.narrow { width: 23px; }

  main { width: 100%; max-width: 1706px; margin: 0 auto; padding: 7px 0 32px; }
  h1 { margin: 0 0 32px; font-size: 51px; font-weight: 600; line-height: 64px; }
  .grid { display: grid; grid-template-columns: repeat(3, 1fr); gap: 33px; }
  .card { display: flex; flex-direction: column; overflow: hidden; border: 1px solid #dfe0e2; border-radius: 6px; background: #fff; box-shadow: 0 3px 6px #00000013; }
  h2 { margin: 0; padding: 11px 21px; border-bottom: 1px solid #dfe0e2; background: #333; color: #fff; font-size: 25px; font-weight: 600; line-height: 32px; }
  .body { display: flex; flex: 1; flex-direction: column; padding: 22px 21px 10px; }
  .body p { margin: 0 0 21px; text-align: center; line-height: 32px; }
  .body p, .ball, .alert, .clock { font-family: "Noto Sans", "Open Sans", sans-serif; }
  .draw { font-weight: 700; }
  .date { color: #6c757d; }
  .balls { display: flex; align-items: center; justify-content: center; gap: 11px; margin-bottom: 22px; }
  .ball { display: flex; align-items: center; justify-content: center; width: 43px; height: 43px; border-radius: 50%; font-weight: 700; box-shadow: inset 0 0 3px 1px #00000026, 0 3px 4px #00000026; }
  .red { background: #d0453e; }
  .yellow { background: #fbdf50; }
  .green { background: #489b49; }
  .blue { background: #7bc4e8; }
  .plus { width: 24px; text-align: center; font-weight: 600; color: #333; }
  table { width: 100%; margin-bottom: 66px; border-collapse: collapse; font-size: 18px; line-height: 24px; }
  tr { border-bottom: 1px dotted #d9d9d9; }
  th, td { height: 38px; padding: 0; font-weight: 600; text-align: left; }
  td { color: #d0453e; text-align: right; }
  .viewall { display: flex; align-items: center; justify-content: center; height: 42px; margin-top: auto; border-radius: 5px; background: #d0453e; color: #fff; font-size: 18px; }
  .alert { display: flex; align-items: center; gap: 16px; margin-top: 65px; padding: 22px 21px; border: 1px solid #bdeff8; border-radius: 8px; background: #d3f2fa; color: #1d505c; line-height: 32px; }
  .info { width: 22px; height: 22px; fill: currentColor; }
  footer { flex: 1; border-top: 2px solid #fbdf50; background: #fff; }

  .scrollbar { display: flex; flex: none; flex-direction: column; align-items: center; width: 21px; padding: 5px 0 4px; background: #2c2c2c; }
  .arrow { width: 16px; height: 14px; }
  .track { display: flex; flex: 1; justify-content: center; padding: 32px 0 50px; }
  .thumb { width: 13px; border-radius: 7px; background: #9e9e9e; }

  .taskbar { display: grid; grid-template-columns: 1fr auto 1fr; align-items: center; height: 70px; border-top: 2px solid #4b4163; background: linear-gradient(90deg, #1d1b4e 0, #1b175f 15%, #1d165c 35%, #2a1356 46%, #33113f 55%, #361239 70%, #35133a 78%, #2d1638 85%, #35113a 92%, #370f37); color: #fff; font-size: 17px; line-height: 24px; }
  .weather { justify-self: start; gap: 11px; margin-left: 29px; }
  .weathericon { position: relative; }
  .weathertext { display: flex; flex-direction: column; align-items: flex-start; }
  .dim { color: #c9c7dc; }
  .badge { position: absolute; display: flex; align-items: center; justify-content: center; width: 24px; height: 24px; border-radius: 12px; color: #000; font-size: 17px; line-height: 24px; }
  .pink { top: -6px; right: -4px; background: #ff9aa5; }
  .badge.blue { top: 4px; right: 4px; background: #4cc2ff; }
  .apps { display: flex; align-items: center; gap: 6px; padding-left: 3px; }
  .app { position: relative; width: 60px; height: 60px; border: 1px solid transparent; border-radius: 6px; }
  .app.active { border-color: #ffffff18; background: #ffffff14; }
  .bar { position: absolute; bottom: 0; left: 17px; width: 24px; height: 5px; border-radius: 3px; background: #4cc2ff; }
  .dot { position: absolute; bottom: 0; left: 25px; width: 9px; height: 5px; border-radius: 3px; background: #a596a8; }
  .face { position: absolute; top: 4px; right: 4px; }
  .face .photo, .face :global(.photo) { width: 24px; height: 24px; }
  .search { display: flex; align-items: center; gap: 14px; width: 330px; height: 48px; padding: 0 10px 0 16px; border: 1px solid #5b5686; border-radius: 24px; background: #403a75; }
  .search input { flex: 1; min-width: 0; padding: 0; border: 0; outline: 0; background: none; color: #fff; font: inherit; font-size: 20px; }
  .search input::placeholder { color: #d3d1e2; opacity: 1; }
  .castle { width: 64px; height: 38px; }
  .tray { display: flex; align-items: center; justify-self: end; padding-right: 28px; }
  .cloud { margin-left: 24px; }
  .sync { margin-left: 22px; }
  .lang { flex-direction: column; margin-left: 26px; }
  .status { gap: 12px; margin-left: 28px; }
  .clock { flex-direction: column; align-items: flex-end; margin-left: 26px; }
</style>
